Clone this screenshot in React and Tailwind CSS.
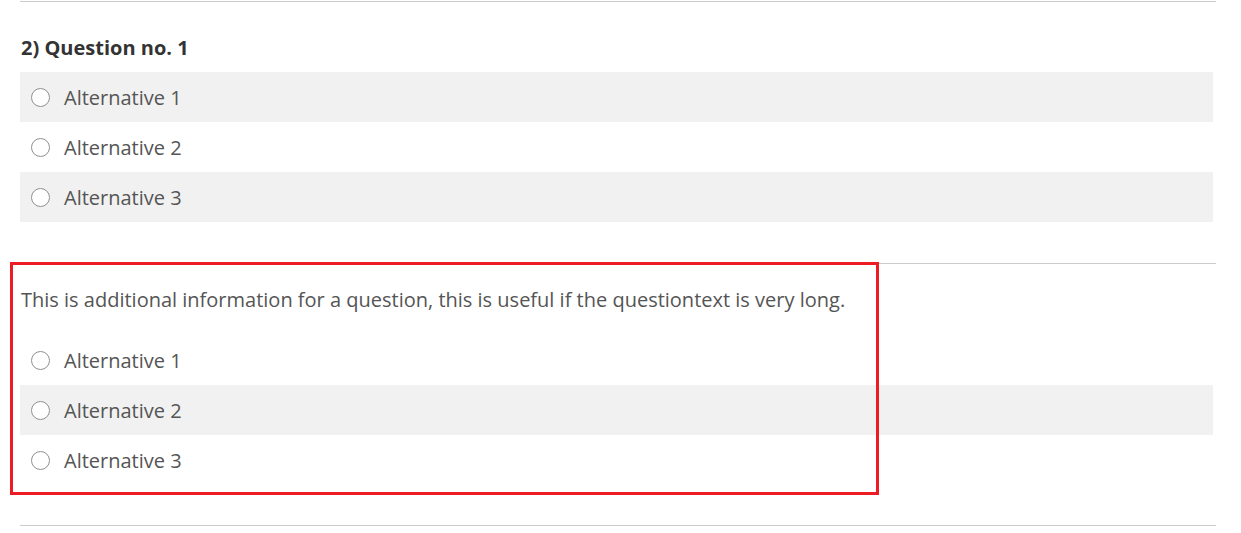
import React from 'react';

const Radio = () => (
    <span className="w-[19px] h-[19px] rounded-full border border-[#909090] bg-white shrink-0" />
);

const Alternative = ({ label, shaded }) => (
    <label className={`flex items-center h-[50px] pl-[11px] gap-[14px] ${shaded ? 'bg-[#f1f1f1]' : ''}`}>
        <Radio />
        <span className="text-[20px] leading-[28px] text-[#555555] translate-y-[1px]">{label}</span>
    </label>
);

const App = () => {
    const alts = ['Alternative 1', 'Alternative 2', 'Alternative 3'];

    return (
        <div className="relative w-[1241px] h-[533px] bg-white font-['Open_Sans',sans-serif] overflow-hidden">
            <div className="pl-[20px] w-[1216px]">
                {/* Question 1 */}
                <div className="border-t border-[#cccccc] mt-[1px] pt-[33px] pb-[41px]">
                    <h3 className="text-[20px] leading-[26px] font-bold text-[#333333] pl-[1px] mb-[11px]">2) Question no. 1</h3>
                    <div className="w-[1193px]">
                        {alts.map((a, i) => (
                            <Alternative key={a} label={a} shaded={i % 2 === 0} />
                        ))}
                    </div>
                </div>

                {/* Question 2 */}
                <div className="border-t border-[#cccccc] pt-[22px] pb-[40px]">
                    <p className="text-[20px] leading-[28px] text-[#555555] pl-[1px] mb-[21px]">
                        This is additional information for a question, this is useful if the questiontext is very long.
                    </p>
                    <div className="w-[1193px]">
                        {alts.map((a, i) => (
                            <Alternative key={a} label={a} shaded={i % 2 === 1} />
                        ))}
                    </div>
                </div>

                <div className="border-t border-[#cccccc]" />
            </div>

            {/* highlight annotation */}
            <div className="absolute left-[10px] top-[262px] w-[869px] h-[233px] border-[3px] border-[#ed1c24] pointer-events-none" />
        </div>
    );
};

export default App;
